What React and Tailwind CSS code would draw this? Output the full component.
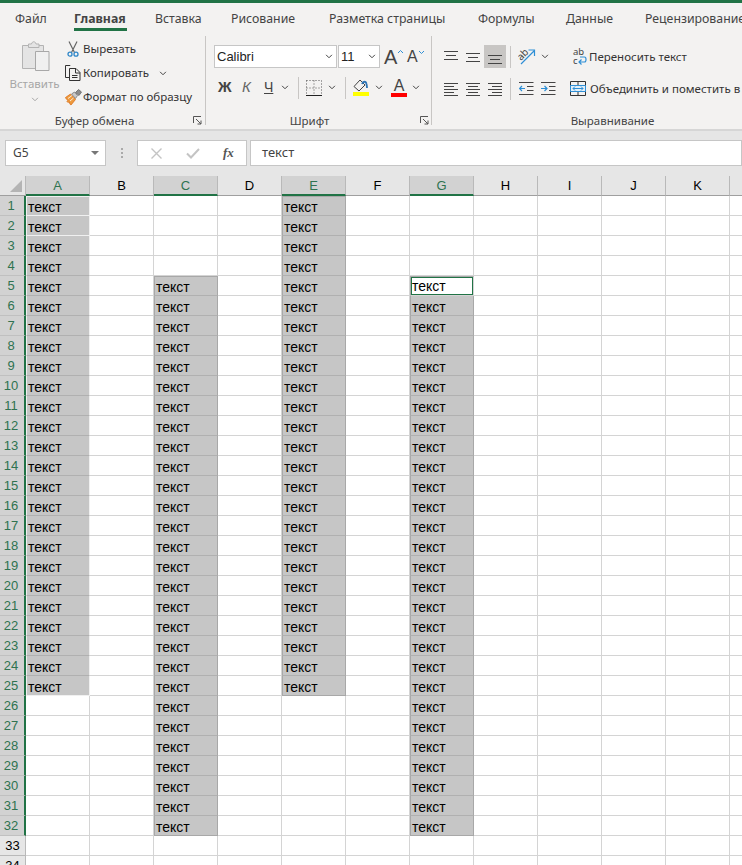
const UI = "font-['Noto_Sans',sans-serif]";
const SHEET = "font-['Liberation_Sans',sans-serif]";

const TABS = [
  { label: "Файл", cls: "ml-[15px] w-[59px]" },
  { label: "Главная", cls: "w-[81px] font-bold text-[#444]", active: true },
  { label: "Вставка", cls: "w-[76px]" },
  { label: "Рисование", cls: "w-[98px]" },
  { label: "Разметка страницы", cls: "w-[149px]" },
  { label: "Формулы", cls: "w-[88px]" },
  { label: "Данные", cls: "w-[79px]" },
  { label: "Рецензирование", cls: "w-[120px]" },
];

const COLUMNS = ["A", "B", "C", "D", "E", "F", "G", "H", "I", "J", "K", "L"];
const ROWS = Array.from({ length: 34 }, (_, i) => i + 1);

// selected ranges on the sheet
const RANGES = {
  A: [1, 25],
  C: [5, 32],
  E: [1, 25],
  G: [5, 32],
};

function Chevron({ className = "", color = "#444" }) {
  return (
    <svg className={className} width="8" height="5" viewBox="0 0 9 6" fill="none">
      <path d="M1 1l3.500 3.500L8 1" stroke={color} strokeWidth="1.200" />
    </svg>
  );
}

function Sep({ className = "" }) {
  return <div className={`w-px bg-[#c8c6c4] ${className}`} />;
}

function PasteIcon() {
  return (
    <svg className="ml-[3px]" width="29" height="30" viewBox="0 0 29 30" fill="none">
      <path d="M.5 4.500h21v23H.5z" fill="#e4e4e4" stroke="#b3b3b3" />
      <path d="M6.500 4.500V3h3c.5-3 4-3 4.500 0h3v3.500H6.500z" fill="#e4e4e4" stroke="#b3b3b3" />
      <path d="M13.500 10.500h13.500v19H13.500z" fill="#f0f0f0" stroke="#a8a8a8" />
    </svg>
  );
}

function ScissorsIcon() {
  return (
    <svg width="12" height="16" viewBox="0 0 12 16" fill="none">
      <path d="M2 .5l5.500 11M10 .5L4.500 11.500" stroke="#666" strokeWidth="1.200" />
      <circle cx="3" cy="13.200" r="2" stroke="#2e86c8" strokeWidth="1.300" />
      <circle cx="9" cy="13.200" r="2" stroke="#2e86c8" strokeWidth="1.300" />
    </svg>
  );
}

function CopyIcon() {
  return (
    <svg width="16" height="16" viewBox="0 0 16 16" fill="none">
      <path d="M5 1V.5H.5v12H4" stroke="#333" />
      <path d="M4.500 3.500H11l4 4v8H4.500zM10.500 3.500v4.500h4.500M7 10.500h5.500M7 12.500h5.500" stroke="#333" />
    </svg>
  );
}

function BrushIcon() {
  return (
    <svg width="17" height="17" viewBox="0 0 17 17" fill="none">
      <path d="M.5 8.500l5-3.500 5 5.500-4.500 5.500c-1-.5-1.500-1.500-1.500-3-1 .5-2 .5-2.500-.5 .5-.5 1-1 1-1.500-1 0-2-1-2.500-2.500z" fill="#ee9a3d" stroke="#d9701b" strokeWidth=".8" />
      <path d="M3 9.500l4-3M5 12l3.500-3" stroke="#fff" strokeWidth=".8" />
      <path d="M6.500 5l3-2 3 3.500-2 3z" fill="#c9c9c9" stroke="#777" strokeWidth=".8" />
      <path d="M10.500 3.500l3-3 3 2.500-2.500 3.500z" fill="#8c8c8c" stroke="#666" strokeWidth=".8" />
    </svg>
  );
}

function BordersIcon() {
  return (
    <svg width="16" height="16" viewBox="0 0 16 16" fill="none">
      <path d="M.5.500h15v15M.5.500v15M8 .5v15M.5 8h15" stroke="#555" strokeDasharray="1 2" />
      <path d="M0 15.500h16" stroke="#222" />
    </svg>
  );
}

function FillIcon() {
  return (
    <svg width="16" height="17" viewBox="0 0 16 17" fill="none">
      <path d="M7 1L1 7.500l5 4.500 6-6z" fill="#f3f2f1" stroke="#444" />
      <path d="M9 5c1-3 4-3 4.500 0 .3 1.500.5 2.500.5 4" stroke="#2e75b6" strokeWidth="1.800" />
      <path d="M0 13h16v4H0z" fill="#ffff00" />
    </svg>
  );
}

function AlignIcon({ lines }) {
  return (
    <svg width="15" height="14" viewBox="0 0 15 14" fill="none">
      {lines.map(([x1, x2, y]) => (
        <path key={y} d={`M${x1} ${y}.5H${x2}`} stroke="#444" />
      ))}
    </svg>
  );
}

function OrientationIcon() {
  return (
    <svg width="18" height="17" viewBox="0 0 18 17" fill="none">
      <text x="0" y="10" fontSize="10" fill="#444" transform="rotate(-45 5 8)" fontFamily="Noto Sans">ab</text>
      <path d="M3 16L16 3M10.500 2H16.500V8" stroke="#2e8fd6" strokeWidth="1.200" />
    </svg>
  );
}

function IndentIcon({ flip }) {
  return (
    <svg width="15" height="14" viewBox="0 0 15 14" fill="none">
      <path d="M0 .5h14.500M8 4.500h6.500M8 8.500h6.500M0 12.500h14.500" stroke="#444" />
      {flip ? (
        <path d="M0 6.500h5.500M3.500 4l2.500 2.500L3.500 9" stroke="#2e8fd6" strokeWidth="1.200" />
      ) : (
        <path d="M6 6.500H.8M3 4L.5 6.500 3 9" stroke="#2e8fd6" strokeWidth="1.200" />
      )}
    </svg>
  );
}

function WrapIcon() {
  return (
    <svg width="15" height="19" viewBox="0 0 15 19" fill="none">
      <text x="1" y="8" fontSize="9.500" fill="#444" fontFamily="Noto Sans">ab</text>
      <text x="1" y="17" fontSize="9.500" fill="#444" fontFamily="Noto Sans">c</text>
      <path d="M8 10h4.500c2 0 2 5 0 5H7M9.500 12.500L7 15l2.500 2.500" stroke="#2e8fd6" strokeWidth="1.200" />
    </svg>
  );
}

function MergeIcon() {
  return (
    <svg width="16" height="15" viewBox="0 0 16 15" fill="none">
      <path d="M.5.500h15v14H.5zM8 .5v4M8 10.500v4" stroke="#333" />
      <path d="M.5 4.500h15v6H.5z" fill="#e3f0fa" stroke="#2e8fd6" />
      <path d="M3 7.500h10M5 5.500l-2 2 2 2M11 5.500l2 2-2 2" stroke="#2e8fd6" />
    </svg>
  );
}

function Launcher({ className = "" }) {
  return (
    <svg className={`absolute ${className}`} width="9" height="9" viewBox="0 0 9 9" fill="none">
      <path d="M.5 7V.5H8M3 3l5 5M8 4.500V8H4.500" stroke="#555" />
    </svg>
  );
}

function ClipboardRow({ icon, children }) {
  return (
    <div className="flex h-6 items-center text-[#333]">
      <div className="flex w-[20px] justify-center">{icon}</div>
      {children}
    </div>
  );
}

function ClipboardGroup() {
  return (
    <section className="relative flex w-[206px] flex-col border-r border-[#c8c6c4]">
      <div className="flex flex-1 pt-px">
        <div className="flex w-[63px] flex-col items-center pt-[4px] pl-[6px]">
          <PasteIcon />
          <span className="mt-[4px] text-[#a6a6a6]">Вставить</span>
          <Chevron className="mt-[5px]" color="#a6a6a6" />
        </div>
        <div>
          <ClipboardRow icon={<ScissorsIcon />}>Вырезать</ClipboardRow>
          <ClipboardRow icon={<CopyIcon />}>
            Копировать
            <Chevron className="ml-[10px]" />
          </ClipboardRow>
          <ClipboardRow icon={<BrushIcon />}>Формат по образцу</ClipboardRow>
        </div>
      </div>
      <div className="h-[11px] pr-[16px] text-center leading-[14px] text-[#444]">Буфер обмена</div>
      <Launcher className="top-[80px] right-[3px]" />
    </section>
  );
}

function FontGroup() {
  return (
    <section className="relative flex w-[226px] flex-col border-r border-[#c8c6c4]">
      <div className="flex-1 pt-[9px] pl-[8px]">
        <div className="flex h-[23px] items-center">
          <div className={`${SHEET} flex h-full w-[123px] items-center justify-between border border-[#c6c6c6] bg-white pr-[3px] pl-[2px] text-[13px] text-[#222]`}>
            Calibri
            <Chevron />
          </div>
          <div className={`${SHEET} ml-px flex h-full w-[42px] items-center justify-between border border-[#c6c6c6] bg-white pr-[3px] pl-[2px] text-[13px] text-[#222]`}>
            11
            <Chevron />
          </div>
          <div className={`${SHEET} ml-[4px] flex w-[23px] items-start text-[20px] leading-none text-[#444]`}>
            A
            <svg className="mt-[2px]" width="7" height="5" viewBox="0 0 7 5" fill="none">
              <path d="M1 4l2.500-2.500L6 4" stroke="#2e8fd6" />
            </svg>
          </div>
          <div className={`${SHEET} flex items-start text-[16px] leading-none text-[#444]`}>
            A
            <svg className="mt-[1px]" width="7" height="5" viewBox="0 0 7 5" fill="none">
              <path d="M1 1l2.500 2.500L6 1" stroke="#2e8fd6" />
            </svg>
          </div>
        </div>
        <div className="mt-[7px] flex h-[25px] items-center text-[#444]">
          <span className={`${SHEET} ml-[4px] w-[24px] text-[15px] font-bold`}>Ж</span>
          <span className={`${SHEET} w-[22px] text-[15px] italic text-[#666]`}>К</span>
          <span className={`${SHEET} w-[17px] text-[14px] underline`}>Ч</span>
          <Chevron />
          <Sep className="ml-[9px] h-[22px]" />
          <div className="ml-[7px]"><BordersIcon /></div>
          <Chevron className="ml-[6px]" />
          <Sep className="ml-[9px] h-[22px]" />
          <div className="ml-[7px]"><FillIcon /></div>
          <Chevron className="ml-[6px]" />
          <div className="ml-[8px] flex w-[16px] flex-col items-center">
            <span className={`${SHEET} text-[16px] leading-[15px] text-[#444]`}>A</span>
            <div className="h-[4px] w-[16px] bg-[#ff0000]" />
          </div>
          <Chevron className="ml-[5px]" />
        </div>
      </div>
      <div className="h-[11px] pr-[18px] text-center leading-[14px] text-[#444]">Шрифт</div>
      <Launcher className="top-[80px] right-[2px]" />
    </section>
  );
}

function AlignmentGroup() {
  return (
    <section className="flex min-w-0 flex-1 flex-col">
      <div className="flex flex-1 pt-[9px] pl-[12px]">
        <div>
          <div className="flex h-[23px] items-center">
            <div className="w-[22px]"><AlignIcon lines={[[0, 14, 1], [2, 12, 5], [0, 14, 9]]} /></div>
            <div className="w-[18px]"><AlignIcon lines={[[0, 14, 3], [2, 12, 7], [0, 14, 11]]} /></div>
            <div className="flex h-[23px] w-[22px] items-center justify-center bg-[#c8c6c4]">
              <AlignIcon lines={[[0, 14, 5], [2, 12, 9], [0, 14, 13]]} />
            </div>
            <Sep className="ml-[4px] h-[22px]" />
            <div className="ml-[7px]"><OrientationIcon /></div>
            <Chevron className="ml-[5px]" />
          </div>
          <div className="mt-[9px] flex h-[23px] items-center">
            <div className="w-[22px]"><AlignIcon lines={[[0, 14, 1], [0, 10, 4], [0, 14, 7], [0, 10, 10], [0, 14, 13]]} /></div>
            <div className="w-[22px]"><AlignIcon lines={[[0, 14, 1], [2, 12, 4], [0, 14, 7], [2, 12, 10], [0, 14, 13]]} /></div>
            <div className="w-[18px]"><AlignIcon lines={[[0, 14, 1], [4, 14, 4], [0, 14, 7], [4, 14, 10], [0, 14, 13]]} /></div>
            <Sep className="ml-[4px] h-[22px]" />
            <div className="ml-[8px] w-[22px]"><IndentIcon /></div>
            <IndentIcon flip />
          </div>
        </div>
        <Sep className="mt-[-3px] ml-[7px] h-[60px]" />
        <div className="shrink-0 pl-[7px] whitespace-nowrap">
          <div className="flex h-[23px] items-center pl-[2px] text-[#333]">
            <WrapIcon />
            <span className="ml-[2px]">Переносить текст</span>
          </div>
          <div className="mt-[9px] flex h-[23px] items-center text-[#333]">
            <MergeIcon />
            <span className="ml-[4px]">Объединить и поместить в центре</span>
          </div>
        </div>
      </div>
      <div className="h-[11px] pl-[51px] text-center leading-[14px] text-[#444]">Выравнивание</div>
    </section>
  );
}

function Ribbon() {
  return (
    <div className={`${UI} h-[126px] bg-[#f3f2f1] text-[11.500px]`}>
      <nav className="flex h-[33px] items-start pt-[7px] text-[12.300px] whitespace-nowrap text-[#444]">
        {TABS.map((tab) => (
          <div key={tab.label} className={`${tab.cls} shrink-0`}>
            <div className={tab.active ? "h-[21px] w-[53px] border-b-[3px] border-[#217346]" : ""}>{tab.label}</div>
          </div>
        ))}
      </nav>
      <div className="flex h-[89px]">
        <ClipboardGroup />
        <FontGroup />
        <AlignmentGroup />
      </div>
    </div>
  );
}

function FormulaBar() {
  return (
    <div className={`${UI} flex h-[47px] items-start border-t-2 border-[#d6d6d6] bg-[#e6e6e6] pt-[9px] pl-[5px] text-[#444]`}>
      <div className="flex h-[26px] w-[101px] items-center justify-between border border-[#c6c6c6] bg-white pr-[6px] pl-[7px] text-[12px]">
        G5
        <div className="h-0 w-0 border-x-[4px] border-t-[4px] border-x-transparent border-t-[#777]" />
      </div>
      <div className="flex h-[26px] w-[31px] flex-col items-center justify-center gap-[2px]">
        <div className="size-[2px] bg-[#aaa]" />
        <div className="size-[2px] bg-[#aaa]" />
        <div className="size-[2px] bg-[#aaa]" />
      </div>
      <div className="flex h-[26px] w-[110px] items-center border border-[#c6c6c6] bg-white">
        <svg className="ml-[13px]" width="11" height="11" viewBox="0 0 11 11" fill="none">
          <path d="M.5.500l10 10M10.500.500l-10 10" stroke="#c4c4c4" strokeWidth="1.400" />
        </svg>
        <svg className="ml-[24px]" width="14" height="11" viewBox="0 0 14 11" fill="none">
          <path d="M1 5.500l4 4L13 1" stroke="#c4c4c4" strokeWidth="2" />
        </svg>
        <span className="ml-[23px] font-['Liberation_Serif',serif] text-[13px] font-bold italic text-[#555]">fx</span>
      </div>
      <div className="ml-[3px] flex h-[26px] flex-1 items-center border border-[#c6c6c6] bg-white pl-[11px] text-[13px]">текст</div>
    </div>
  );
}

function ColumnHeader({ name }) {
  const selected = RANGES[name];
  return (
    <div
      className={`flex h-full w-16 shrink-0 items-center justify-center border-r border-[#b9b9b9] pt-px text-[13px] ${
        selected
          ? "border-b-2 border-b-[#217346] bg-[#d2d2d2] text-[#2f7350]"
          : "border-b border-b-[#9f9f9f] text-black"
      }`}
    >
      {name}
    </div>
  );
}

function Cell({ col, row }) {
  const range = RANGES[col];
  const selected = range && row >= range[0] && row <= range[1];

  if (!selected) {
    return <div className="h-full w-16 shrink-0 border-r border-b border-[#d4d4d4]" />;
  }

  // the active cell
  if (col === "G" && row === 5) {
    return (
      <div className="h-full w-16 shrink-0 border border-[#d4d4d4] border-t-[#a8a8a8] border-l-[#a8a8a8]">
        <div className="h-full border border-[#217346] bg-white text-[14px] leading-[16px] text-black">текст</div>
      </div>
    );
  }

  const top = row === range[0];
  const last = row === range[1];
  const border = col === "A" ? "border-x border-[#f0f0f0]" : "border-x border-[#a8a8a8]";
  const topBorder = top ? (col === "A" ? "border-t border-t-[#f0f0f0]" : "border-t border-t-[#a8a8a8]") : "";
  const bottom =
    col === "A" && (row === 1 || row === 2 || last)
      ? "border-b border-b-[#f0f0f0]"
      : last
        ? "border-b border-b-[#a8a8a8]"
        : "border-b border-b-[#b0b0b0]";

  return (
    <div className={`flex h-full w-16 shrink-0 items-center bg-[#c6c6c6] pt-[2px] pl-[1px] text-[14px] leading-[18px] text-black ${border} ${topBorder} ${bottom}`}>
      текст
    </div>
  );
}

function Sheet() {
  return (
    <div className={`${SHEET} text-[13px]`}>
      <div className="flex h-5 bg-[#e6e6e6]">
        <div className="flex h-full w-[26px] shrink-0 items-end justify-end border-r border-b border-r-[#b9b9b9] border-b-[#9f9f9f] pr-[3px] pb-[3px]">
          <div className="h-0 w-0 border-b-[12px] border-l-[12px] border-b-[#b4b4b4] border-l-transparent" />
        </div>
        {COLUMNS.map((name) => (
          <ColumnHeader key={name} name={name} />
        ))}
      </div>
      {ROWS.map((row) => (
        <div key={row} className="flex h-5 bg-white">
          <div
            className={`flex h-full w-[26px] shrink-0 items-center justify-center border-b pt-px text-[13px] ${
              row <= 32
                ? "border-r-2 border-r-[#217346] border-b-[#c0c0c0] bg-[#d2d2d2] pr-[2px] text-[#2f7350]"
                : "border-r border-r-[#b9b9b9] border-b-[#b9b9b9] bg-[#e6e6e6] text-black"
            }`}
          >
            {row}
          </div>
          {COLUMNS.map((col) => (
            <Cell key={col} col={col} row={row} />
          ))}
        </div>
      ))}
    </div>
  );
}

export default function App() {
  return (
    <div className="h-[865px] w-[742px] overflow-hidden border-t-[3px] border-[#217346] bg-white">
      <Ribbon />
      <FormulaBar />
      <Sheet />
    </div>
  );
}
